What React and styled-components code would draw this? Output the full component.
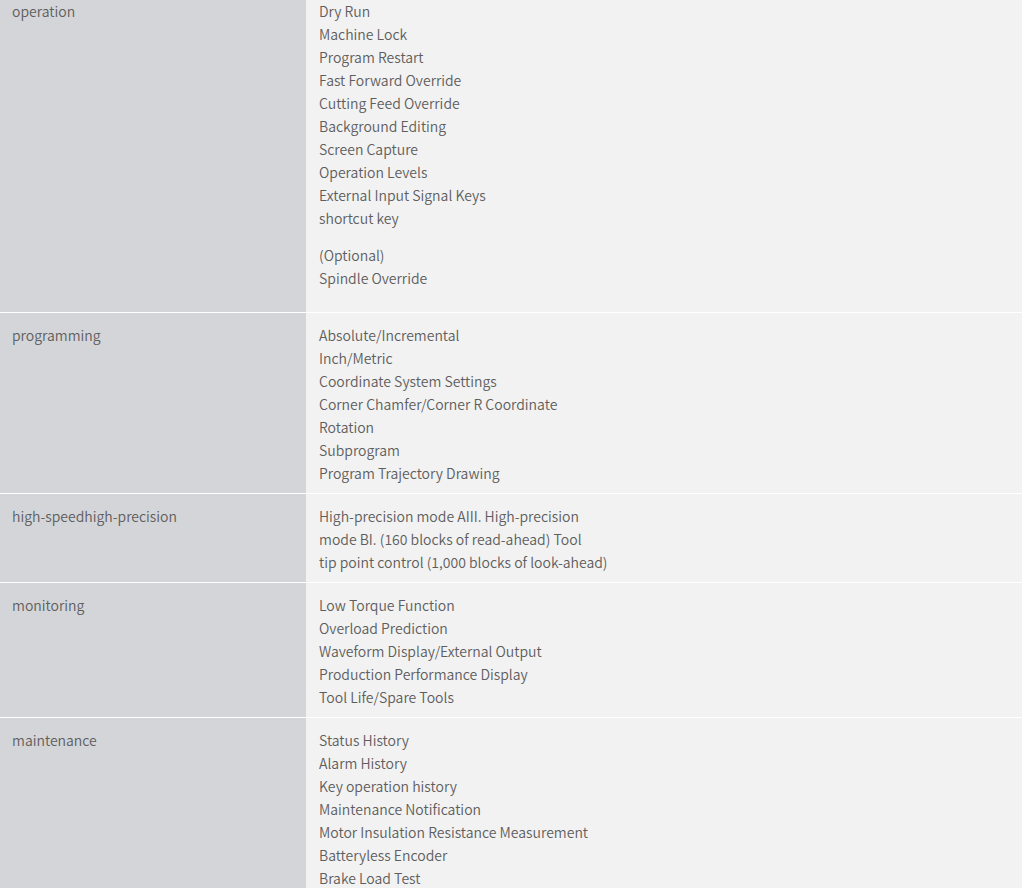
import React from 'react'
import styled, { createGlobalStyle } from 'styled-components'

const GlobalStyle = createGlobalStyle`
  html, body {
    margin: 0;
    padding: 0;
    background: #ffffff;
  }
  body {
    font-family: "Noto Sans CJK JP", "Noto Sans", sans-serif;
    color: #5e5e5e;
    overflow: hidden;
  }
`

const specs = [
  {
    label: 'operation',
    groups: [
      [
        'Dry Run',
        'Machine Lock',
        'Program Restart',
        'Fast Forward Override',
        'Cutting Feed Override',
        'Background Editing',
        'Screen Capture',
        'Operation Levels',
        'External Input Signal Keys',
        'shortcut key',
      ],
      ['(Optional)', 'Spindle Override'],
    ],
  },
  {
    label: 'programming',
    items: [
      'Absolute/Incremental',
      'Inch/Metric',
      'Coordinate System Settings',
      'Corner Chamfer/Corner R Coordinate',
      'Rotation',
      'Subprogram',
      'Program Trajectory Drawing',
    ],
  },
  {
    label: 'high-speedhigh-precision',
    items: [
      'High-precision mode AIII. High-precision',
      'mode BI. (160 blocks of read-ahead) Tool',
      'tip point control (1,000 blocks of look-ahead)',
    ],
  },
  {
    label: 'monitoring',
    items: [
      'Low Torque Function',
      'Overload Prediction',
      'Waveform Display/External Output',
      'Production Performance Display',
      'Tool Life/Spare Tools',
    ],
  },
  {
    label: 'maintenance',
    items: [
      'Status History',
      'Alarm History',
      'Key operation history',
      'Maintenance Notification',
      'Motor Insulation Resistance Measurement',
      'Batteryless Encoder',
      'Brake Load Test',
    ],
  },
]

const App = () => {
  return (
    <>
      <GlobalStyle />
      <SpecTable>
        {specs.map(({ label, groups, items }) => (
          <Row key={label}>
            <Label>{label}</Label>
            <Value>
              {groups
                ? groups.map((g, i) => (
                    <Para key={i}>
                      {g.map(line => <Line key={line}>{line}</Line>)}
                    </Para>
                  ))
                : items.map(line => <Line key={line}>{line}</Line>)}
            </Value>
          </Row>
        ))}
      </SpecTable>
    </>
  )
}

const SpecTable = styled.div`
  width: 1022px;
  margin-top: -11px;
  display: flex;
  flex-direction: column;
`
const Row = styled.div`
  display: grid;
  grid-template-columns: 306px 1fr;
  border-bottom: 1px solid #ffffff;
  font-size: 14px;
  font-weight: 350;
  line-height: 23px;
`
const Label = styled.div`
  background: #d4d5d8;
  padding: 11px 12px 8px;
`
const Value = styled.div`
  background: #f2f2f2;
  padding: 11px 13px 8px;
`
const Para = styled.div`
  margin-bottom: 14px;
`
const Line = styled.div`
  white-space: nowrap;
`

export default App
